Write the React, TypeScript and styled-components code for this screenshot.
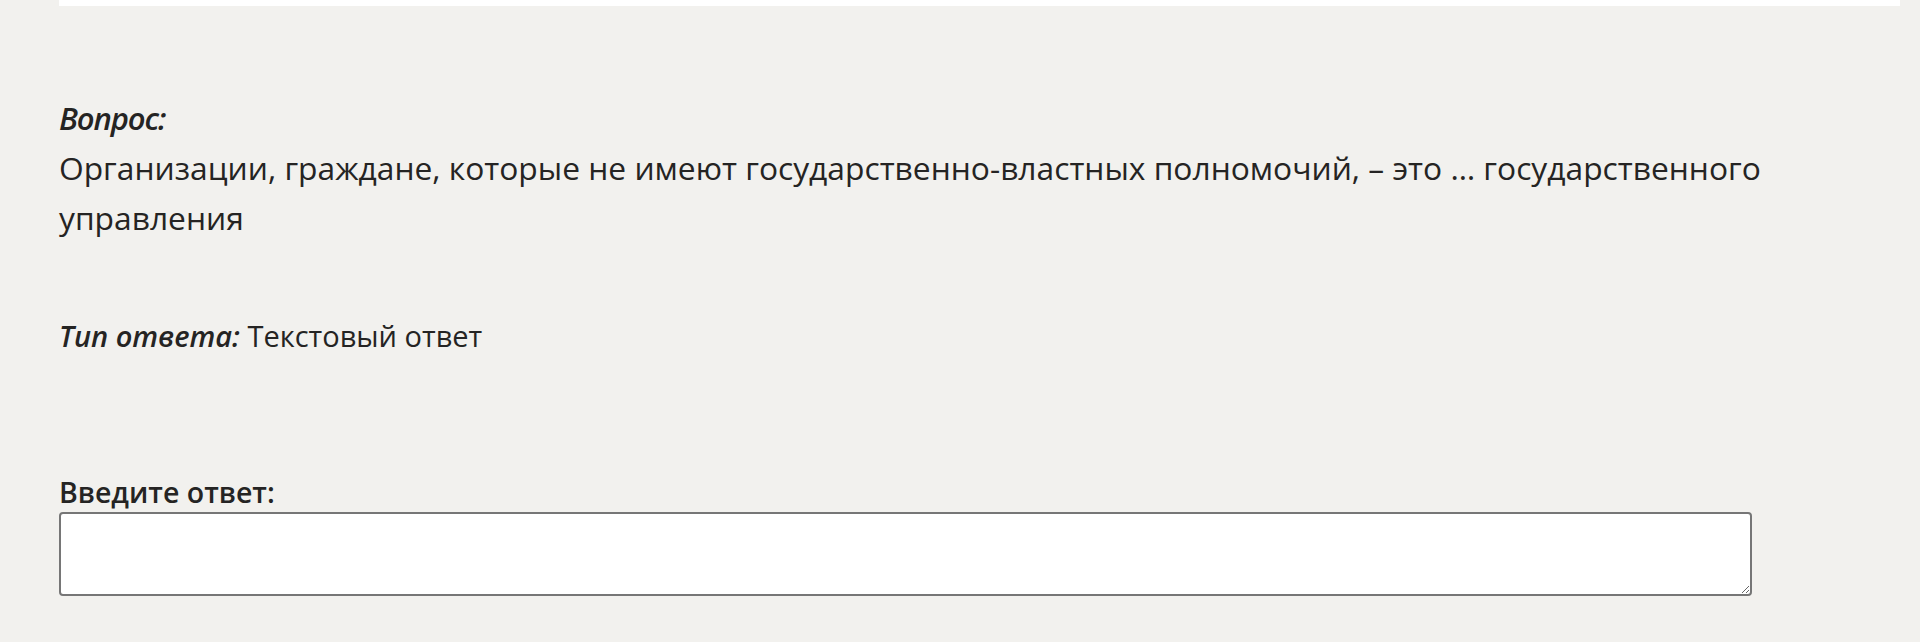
import React from 'react';
import styled, { createGlobalStyle } from 'styled-components';

const GlobalStyle = createGlobalStyle`
  html, body {
    margin: 0;
    padding: 0;
    background: #f2f1ee;
  }
  body {
    font-family: 'Open Sans', 'Noto Sans', sans-serif;
    color: #252423;
  }
`;

const Page = styled.div`
  display: flex;
  flex-direction: column;
  padding: 0 20px 40px 59px;
  min-height: 642px;
  box-sizing: border-box;
`;

const TopCard = styled.div`
  height: 6px;
  background: #ffffff;
`;

const QuestionBlock = styled.section`
  margin-top: 87px;
  font-size: 31.75px;
  line-height: 50px;
`;

const Caption = styled.div`
  font-style: italic;
  font-weight: 600;
  font-size: 31px;
  letter-spacing: -1.1px;
`;

const QuestionText = styled.p`
  margin: 0;
  font-weight: 400;
`;

const AnswerType = styled.div`
  margin-top: 68px;
  font-size: 29px;
  line-height: 50px;
`;

const InlineCaption = styled.span`
  font-style: italic;
  font-weight: 600;
`;

const AnswerLabel = styled.label`
  display: block;
  margin-top: 111px;
  font-size: 28.5px;
  line-height: 40px;
  font-weight: 600;
`;

const AnswerInput = styled.textarea`
  display: block;
  width: 1693px;
  height: 84px;
  box-sizing: border-box;
  border: 2px solid #767676;
  border-radius: 4px;
  background: #ffffff;
  font-family: 'Open Sans', sans-serif;
  font-size: 28px;
  padding: 4px 8px;
  outline: none;
`;

const App = () => {
  return (
    <>
      <GlobalStyle />
      <Page>
        <TopCard />
        <QuestionBlock>
          <Caption>Вопрос:</Caption>
          <QuestionText>
            Организации, граждане, которые не имеют государственно-властных полномочий, – это … государственного управления
          </QuestionText>
        </QuestionBlock>
        <AnswerType>
          <InlineCaption>Тип ответа:</InlineCaption> Текстовый ответ
        </AnswerType>
        <AnswerLabel htmlFor="answer">Введите ответ:</AnswerLabel>
        <AnswerInput id="answer" />
      </Page>
    </>
  );
};

export default App;
